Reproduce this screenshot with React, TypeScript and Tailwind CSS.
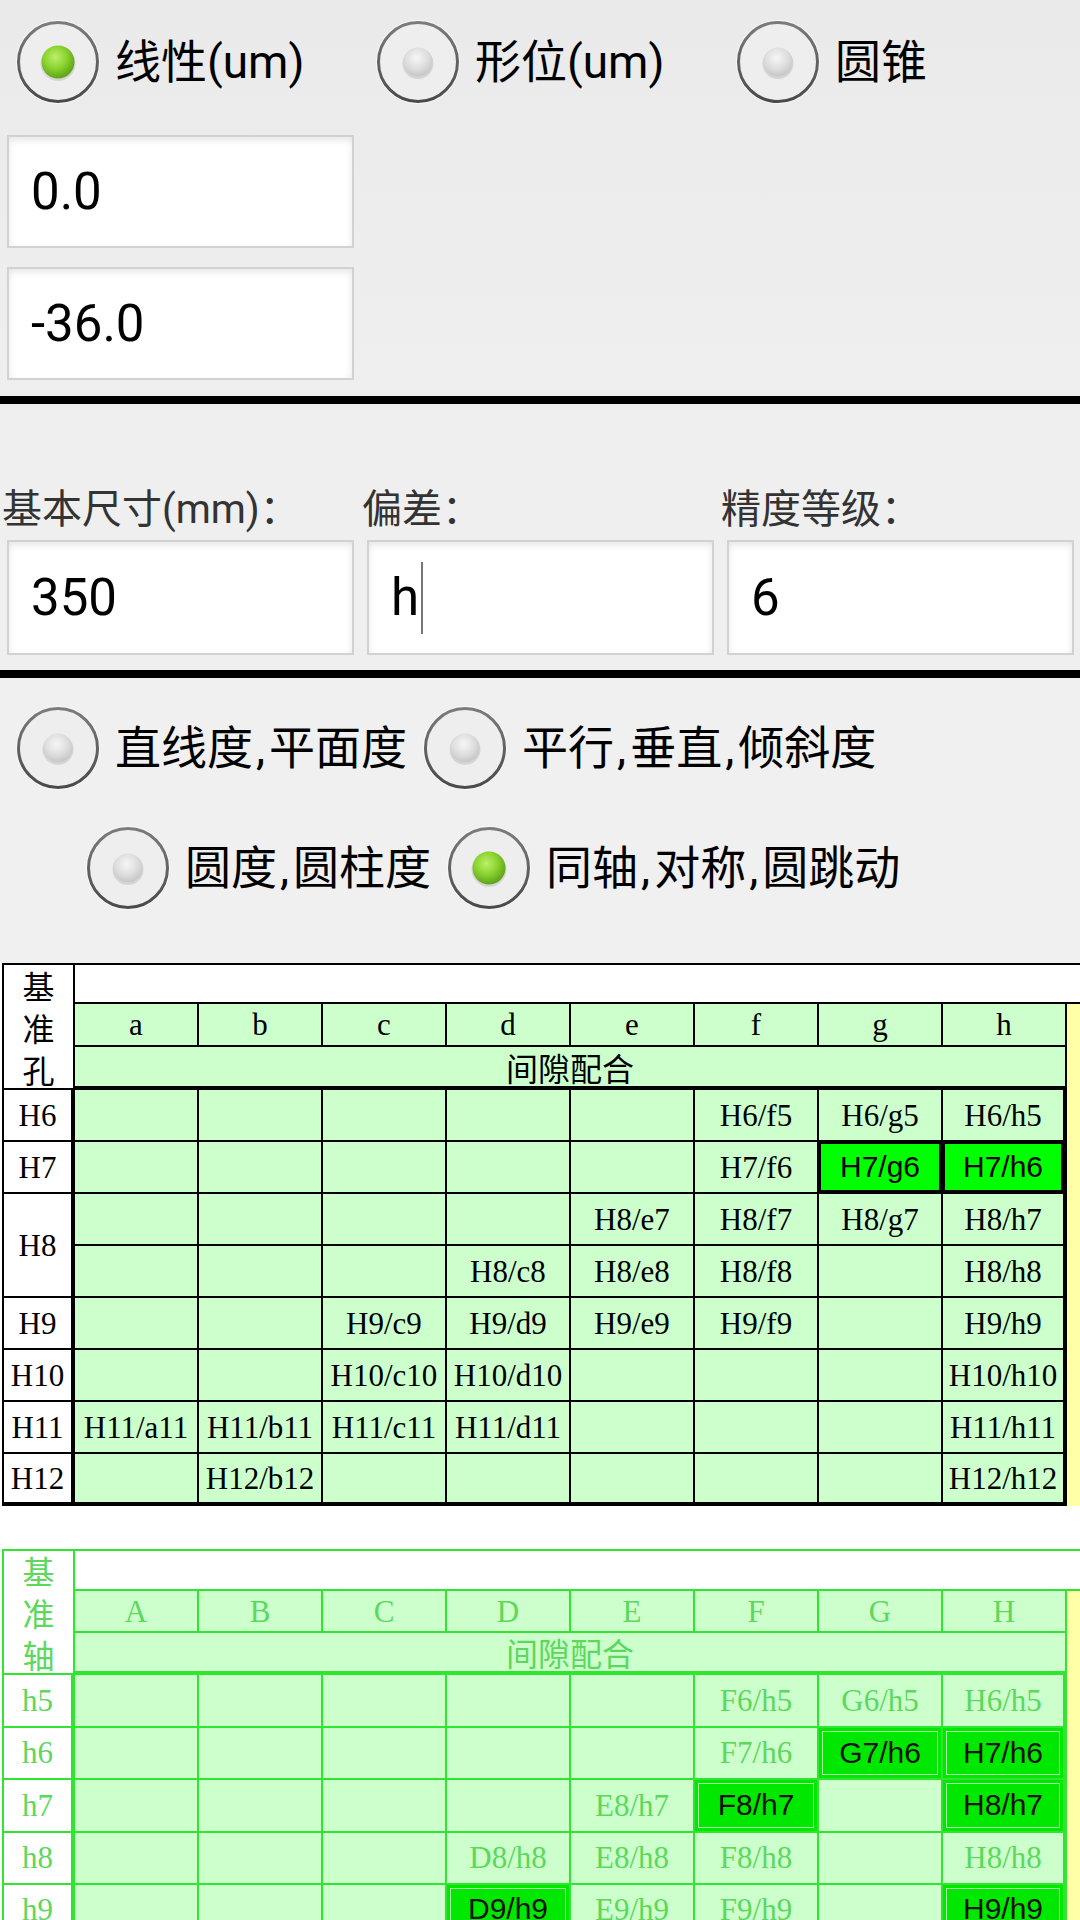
import React from "react";

function Radio({ on }: { on?: boolean }) {
  return (
    <svg width="84" height="84" viewBox="0 0 84 84" className="shrink-0">
      <defs>
        <radialGradient id="rg-on" cx="42%" cy="36%" r="62%">
          <stop offset="0%" stopColor="#bdf06a" />
          <stop offset="55%" stopColor="#8bd32f" />
          <stop offset="100%" stopColor="#5fa61b" />
        </radialGradient>
        <radialGradient id="rg-off" cx="45%" cy="36%" r="62%">
          <stop offset="0%" stopColor="#f6f6f6" />
          <stop offset="60%" stopColor="#dedede" />
          <stop offset="100%" stopColor="#c8c8c8" />
        </radialGradient>
        <linearGradient id="rg-ring" x1="0" y1="0" x2="0" y2="1">
          <stop offset="0%" stopColor="#7c7c7c" />
          <stop offset="100%" stopColor="#4a4a4a" />
        </linearGradient>
      </defs>
      <circle cx="42" cy="42" r="42" fill="#f9f9f9" />
      <circle cx="42" cy="42" r="39.5" fill="#eeeeee" stroke="url(#rg-ring)" strokeWidth="3" />
      <circle cx="42" cy="43.5" r={on ? 17.5 : 15.5} fill="rgba(0,0,0,0.10)" />
      <circle cx="42" cy="42" r={on ? 16.5 : 14.5} fill={on ? "url(#rg-on)" : "url(#rg-off)"} />
    </svg>
  );
}

function RadioItem({ on, label }: { on?: boolean; label: string }) {
  const parts = label.split(",");
  return (
    <div className="flex items-center gap-[15px] pl-4 shrink-0">
      <Radio on={on} />
      <span className="text-[46px] leading-none text-black whitespace-nowrap">
        {parts.map((p, i) => (
          <React.Fragment key={i}>
            {p}
            {i < parts.length - 1 ? <span className="ml-[3px] mr-[4px]">,</span> : null}
          </React.Fragment>
        ))}
      </span>
    </div>
  );
}

function Field({ value, cursor, h }: { value: string; cursor?: boolean; h: string }) {
  return (
    <div
      className={
        "ml-[7px] w-[347px] bg-white border-2 border-[#d2d2d2] shadow-[inset_0_3px_7px_rgba(0,0,0,0.10)] flex items-center pl-[22px] text-[51px] text-black leading-none " +
        h
      }
    >
      <span>{value}</span>
      {cursor ? <span className="inline-block w-[2px] h-[72px] bg-[#777] ml-[2px]" /> : null}
    </div>
  );
}

type Row = { label?: string; span?: boolean; cells: string[] };

const t1Rows: Row[] = [
  { label: "H6", cells: ["", "", "", "", "", "H6/f5", "H6/g5", "H6/h5"] },
  { label: "H7", cells: ["", "", "", "", "", "H7/f6", "*H7/g6", "*H7/h6"] },
  { label: "H8", span: true, cells: ["", "", "", "", "H8/e7", "H8/f7", "H8/g7", "H8/h7"] },
  { cells: ["", "", "", "H8/c8", "H8/e8", "H8/f8", "", "H8/h8"] },
  { label: "H9", cells: ["", "", "H9/c9", "H9/d9", "H9/e9", "H9/f9", "", "H9/h9"] },
  { label: "H10", cells: ["", "", "H10/c10", "H10/d10", "", "", "", "H10/h10"] },
  { label: "H11", cells: ["H11/a11", "H11/b11", "H11/c11", "H11/d11", "", "", "", "H11/h11"] },
  { label: "H12", cells: ["", "H12/b12", "", "", "", "", "", "H12/h12"] },
];

const t2Rows: Row[] = [
  { label: "h5", cells: ["", "", "", "", "", "F6/h5", "G6/h5", "H6/h5"] },
  { label: "h6", cells: ["", "", "", "", "", "F7/h6", "*G7/h6", "*H7/h6"] },
  { label: "h7", cells: ["", "", "", "", "E8/h7", "*F8/h7", "", "*H8/h7"] },
  { label: "h8", cells: ["", "", "", "D8/h8", "E8/h8", "F8/h8", "", "H8/h8"] },
  { label: "h9", cells: ["", "", "", "*D9/h9", "E9/h9", "F9/h9", "", "*H9/h9"] },
];

function Mono({ children }: { children: React.ReactNode }) {
  return (
    <span className="font-['Liberation_Serif',serif] text-[31px] leading-none whitespace-nowrap">
      {children}
    </span>
  );
}

function FitTable({
  green,
  axis,
  letters,
  rows,
}: {
  green?: boolean;
  axis: string[];
  letters: string[];
  rows: Row[];
}) {
  const bc = green ? "border-[#2fe52f]" : "border-black";
  const tc = green ? "text-[#5cd85c]" : "text-black";
  const cjk = "font-['Noto_Sans_CJK_SC',sans-serif]";
  return (
    <div
      className={
        (green
          ? "grid-rows-[40px_42px_42px_repeat(5,52.5px)] "
          : "grid-rows-[39px_43px_43px_repeat(8,52px)] ") +
        "grid grid-cols-[71px_repeat(8,124px)_40px] ml-[2px] border-t-2 border-l-2 " +
        bc
      }
    >
      <div
        className={
          "row-span-3 bg-white border-r-2 border-b-2 flex flex-col items-center justify-center text-[32px] leading-[42px] " +
          bc + " " + tc + " " + cjk
        }
      >
        {axis.map((c) => (
          <span key={c}>{c}</span>
        ))}
      </div>
      <div className={"col-span-9 bg-white border-b-2 " + bc} />
      {letters.map((l) => (
        <div
          key={l}
          className={"bg-[#ccffcc] border-r-2 border-b-2 flex items-center justify-center " + bc + " " + tc}
        >
          <Mono>{l}</Mono>
        </div>
      ))}
      <div className={(green ? "row-span-7 " : "row-span-10 ") + "bg-[#ffffa8]"} />
      <div
        className={
          "col-span-8 bg-[#ccffcc] border-r-2 border-b-4 flex items-center justify-center text-[32px] leading-none " +
          bc + " " + tc + " " + cjk
        }
      >
        间隙配合
      </div>
      {rows.map((r, ri) => {
        const last = ri === rows.length - 1;
        const items: React.ReactNode[] = [];
        if (r.label) {
          items.push(
            <div
              key={"l" + ri}
              className={
                (r.span ? "row-span-2 " : "") +
                (last ? "border-b-4 " : "border-b-2 ") +
                "bg-white border-r-4 flex items-center justify-center " +
                bc + " " + tc
              }
            >
              <Mono>{r.label}</Mono>
            </div>
          );
        }
        r.cells.forEach((c, ci) => {
          const hl = c.startsWith("*");
          const text = hl ? c.slice(1) : c;
          const br = ci === 7 ? "border-r-4 " : "border-r-2 ";
          const bb = last ? "border-b-4 " : "border-b-2 ";
          const bg = hl
            ? green
              ? "bg-[#00e800] shadow-[inset_0_0_0_3px_#00e800,inset_0_0_0_4px_#a8f8a8] text-[#111] "
              : "bg-[#00ff00] shadow-[inset_0_0_0_2px_#000] text-black "
            : "bg-[#ccffcc] " + tc + " ";
          items.push(
            <div key={ri + "-" + ci} className={br + bb + bg + bc + " flex items-center justify-center"}>
              {text ? (
                hl ? (
                  <span className="font-['Liberation_Sans',Arial,sans-serif] text-[30px] leading-none">{text}</span>
                ) : (
                  <Mono>{text}</Mono>
                )
              ) : null}
            </div>
          );
        });
        return items;
      })}
    </div>
  );
}

export default function App() {
  return (
    <div className="w-[1080px] h-[1920px] overflow-hidden bg-white font-['Roboto','Noto_Sans_CJK_SC',sans-serif]">
      <section className="h-[396px] bg-linear-to-b from-[#eaeaea] to-[#efefef]">
        <div className="grid grid-cols-3 h-[124px] items-center">
          <RadioItem on label="线性(um)" />
          <RadioItem label="形位(um)" />
          <RadioItem label="圆锥" />
        </div>
        <div className="mt-[11px]">
          <Field value="0.0" h="h-[113px]" />
        </div>
        <div className="mt-[19px]">
          <Field value="-36.0" h="h-[113px]" />
        </div>
      </section>
      <div className="h-[8px] bg-black" />
      <section className="h-[266px] bg-[#efefef] pt-[82px]">
        <div className="grid grid-cols-3">
          <div className="pl-[2px] h-[48px] leading-[48px] text-[40px] text-[#333]">基本尺寸(mm)：</div>
          <div className="pl-[2px] h-[48px] leading-[48px] text-[40px] text-[#333]">偏差：</div>
          <div className="pl-[1px] h-[48px] leading-[48px] text-[40px] text-[#333]">精度等级：</div>
        </div>
        <div className="grid grid-cols-3 mt-[6px]">
          <Field value="350" h="h-[115px]" />
          <Field value="h" cursor h="h-[115px]" />
          <Field value="6" h="h-[115px]" />
        </div>
      </section>
      <div className="h-[8px] bg-black" />
      <section className="h-[285px] bg-[#f0f0f0] pt-[28px]">
        <div className="flex h-[84px] items-center">
          <RadioItem label="直线度,平面度" />
          <RadioItem label="平行,垂直,倾斜度" />
        </div>
        <div className="flex h-[84px] items-center mt-[36px] pl-[70px]">
          <RadioItem label="圆度,圆柱度" />
          <RadioItem on label="同轴,对称,圆跳动" />
        </div>
      </section>
      <div className="bg-white overflow-hidden">
        <FitTable axis={["基", "准", "孔"]} letters={["a", "b", "c", "d", "e", "f", "g", "h"]} rows={t1Rows} />
        <div className="h-[43px]" />
        <FitTable green axis={["基", "准", "轴"]} letters={["A", "B", "C", "D", "E", "F", "G", "H"]} rows={t2Rows} />
      </div>
    </div>
  );
}
